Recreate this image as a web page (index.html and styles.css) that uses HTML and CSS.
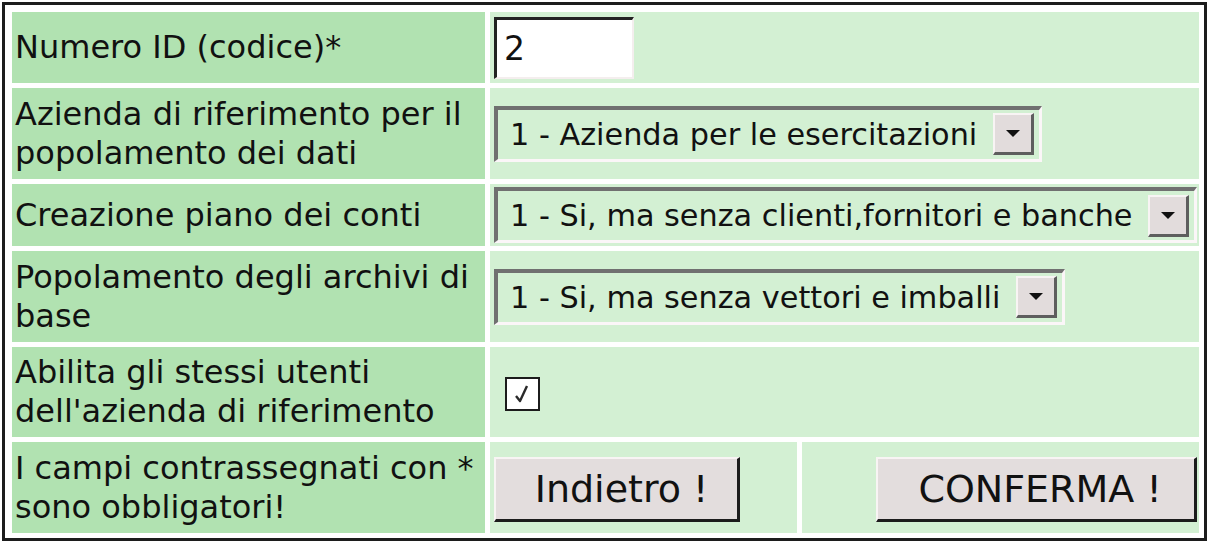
FILE: index.html
```
<!DOCTYPE html>
<html lang="it">
  <head>
    <meta charset="UTF-8" />
    <title>Nuova azienda</title>
    <link rel="stylesheet" href="styles.css">
  </head>
  <body>
    <form class="frame">
      <!-- codice -->
      <div class="label">Numero ID (codice)*</div>
      <div class="field wide">
        <input class="textbox" type="text" value="2" />
      </div>

      <div class="label">Azienda di riferimento per il popolamento dei dati</div>
      <div class="field wide">
        <span class="combo">
          <select><option>1 - Azienda per le esercitazioni</option></select>
          <span class="arrow"></span>
        </span>
      </div>

      <div class="label">Creazione piano dei conti</div>
      <div class="field wide">
        <span class="combo">
          <select><option>1 - Si, ma senza clienti,fornitori e banche</option></select>
          <span class="arrow"></span>
        </span>
      </div>

      <div class="label">Popolamento degli archivi di base</div>
      <div class="field wide">
        <span class="combo">
          <select><option>1 - Si, ma senza vettori e imballi</option></select>
          <span class="arrow"></span>
        </span>
      </div>

      <div class="label">Abilita gli stessi utenti dell'azienda di riferimento</div>
      <div class="field wide">
        <span class="checkbox">
          <svg width="31" height="30" viewBox="0 0 31 30"><path d="M9 17 L13 22 L20 7" fill="none" stroke="#2a2a2a" stroke-width="2.4" stroke-linejoin="round"/></svg>
        </span>
      </div>

      <!-- pulsanti -->
      <div class="label">I campi contrassegnati con * sono obbligatori!</div>
      <div class="field">
        <button type="button" class="btn back">Indietro !</button>
      </div>
      <div class="field right">
        <button type="submit" class="btn confirm">CONFERMA !</button>
      </div>
    </form>
  </body>
</html>
```

FILE: styles.css
```
body {
  margin: 0;
  background: #ffffff;
  font-family: "DejaVu Sans", Verdana, sans-serif;
  color: #111;
}

.frame {
  display: grid;
  grid-template-columns: 473px 307px 397px;
  grid-template-rows: 71px 91px 62px 91px 90px 91px;
  gap: 5px;
  width: max-content;
  margin: 2px 0 0 2px;
  padding: 7px 5px 5px 7px;
  border: 3px solid #1c1c1c;
}

.label {
  background-color: #b1e2b1;
  font-size: 32px;
  line-height: 39px;
  padding: 0 6px 0 3px;
  display: flex;
  align-items: center;
}

.field {
  background-color: #d3f0d3;
  display: flex;
  align-items: center;
  padding-left: 4px;
}

.field.wide {
  grid-column: span 2;
}

.field.right {
  justify-content: flex-end;
  padding: 0 2px 0 0;
}

.textbox {
  width: 128px;
  height: 57px;
  box-sizing: content-box;
  padding: 0 0 0 7px;
  margin: 0;
  font-family: "DejaVu Sans", sans-serif;
  font-size: 33px;
  color: #111;
  background: #fff;
  border-style: solid;
  border-width: 3px 2px 2px 3px;
  border-color: #222 #f4eeee #f4eeee #222;
  outline: none;
  border-radius: 0;
}

.combo {
  display: inline-flex;
  align-items: center;
  height: 56px;
  box-sizing: border-box;
  border-style: solid;
  border-width: 4px 3px 3px 4px;
  border-color: #707070 #fbf6f8 #fbf6f8 #707070;
  padding-right: 5px;
}

.combo select {
  appearance: none;
  -webkit-appearance: none;
  border: none;
  background: transparent;
  font-family: "DejaVu Sans", sans-serif;
  font-size: 30.3px;
  color: #111;
  padding: 0 15px 0 12px;
  margin: 0;
  height: 44px;
  outline: none;
}

.arrow {
  width: 36px;
  height: 37px;
  background: #e2dcdc;
  border-style: solid;
  border-width: 2px 3px 3px 2px;
  border-color: #f8f4f4 #5e5e5e #5e5e5e #f8f4f4;
  display: flex;
  align-items: center;
  justify-content: center;
}

.arrow::after {
  content: "";
  border-style: solid;
  border-width: 7px 7px 0 7px;
  border-color: #111 transparent transparent transparent;
}

.checkbox {
  width: 31px;
  height: 30px;
  margin: 4px 0 0 11px;
  background: #fff;
  border: 2px solid #1c1c1c;
  display: flex;
}

.btn {
  height: 65px;
  font-family: "DejaVu Sans", sans-serif;
  font-size: 38px;
  color: #111;
  background: #e3dddd;
  border-style: solid;
  border-width: 2px 3px 3px 2px;
  border-color: #f8f4f4 #1c1c1c #1c1c1c #f8f4f4;
  border-radius: 0;
  padding: 0;
  margin-top: 4px;
}

.btn.back {
  width: 246px;
  padding-left: 10px;
}

.btn.confirm {
  width: 321px;
  padding-left: 8px;
}
```
